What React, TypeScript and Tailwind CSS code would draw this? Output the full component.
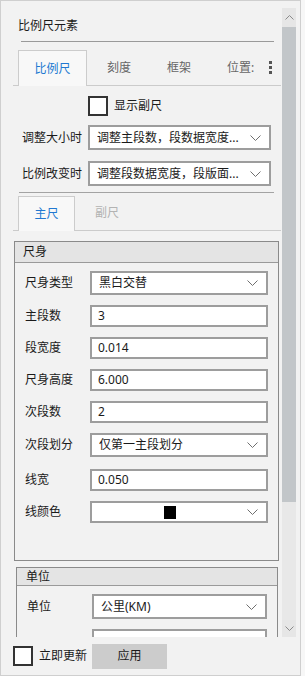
import React from "react";

function Chevron() {
  return (
    <svg width="11" height="6" viewBox="0 0 11 6" className="shrink-0">
      <polyline points="0.5,0.5 5.5,5.5 10.5,0.5" fill="none" stroke="#6f6f6f" strokeWidth="1" />
    </svg>
  );
}

function Select({ text, w, h = 25 }: { text: string; w: string; h?: number }) {
  return (
    <div
      className={`flex items-center border-2 border-[#9d9d9d] bg-white pl-[7px] pr-[8px] ${w} ${h === 25 ? "h-[25px]" : h === 24 ? "h-[24px]" : "h-[22px]"}`}
    >
      <span className="flex-1 truncate text-[12px] leading-[16px] text-[#1a1a1a]">{text}</span>
      <Chevron />
    </div>
  );
}

function Input({ value, w }: { value: string; w: string }) {
  return (
    <div className={`flex h-[22px] items-center border-2 border-[#9d9d9d] bg-white pl-[6px] ${w}`}>
      <span className="text-[12px] leading-[16px] text-[#1a1a1a]">{value}</span>
    </div>
  );
}

function Label({ text, w }: { text: string; w: string }) {
  return <span className={`shrink-0 text-[12px] leading-[16px] text-[#1a1a1a] ${w}`}>{text}</span>;
}

export default function App() {
  return (
    <div className="h-[676px] w-[305px] bg-[#f7f7f7] font-['Noto_Sans','Noto_Sans_CJK_SC',sans-serif]">
      <div className="flex h-[676px] w-[301px] flex-col border border-[#cfcfcf] bg-[#f2f2f2]">
        {/* main area */}
        <div className="flex h-[636px]">
          <div className="flex h-[636px] w-[280px] flex-col overflow-hidden">
            {/* title */}
            <div className="ml-[17px] mt-[17px] text-[12px] leading-[16px] text-[#1a1a1a]">比例尺元素</div>
            <div className="ml-[20px] mt-[7px] h-px w-[253px] shrink-0 bg-[#9a9a9a]" />

            {/* tabs */}
            <div className="ml-[12px] mt-[8px] flex h-[36px] w-[268px] shrink-0 border-b border-[#cbcbcb]">
              <div className="ml-[5px] flex h-[36px] w-[69px] items-center justify-center border border-b-0 border-[#cccccc] bg-[#f8f8f8] text-[12px] text-[#2178d1]">
                比例尺
              </div>
              <div className="flex w-[64px] items-center justify-center text-[12px] text-[#666666]">刻度</div>
              <div className="flex w-[56px] items-center justify-center text-[12px] text-[#666666]">框架</div>
              <div className="flex w-[61px] items-center pl-[20px] text-[12px] text-[#666666]">位置:</div>
              <div className="flex flex-col justify-center gap-[2px] pl-[1px]">
                <div className="h-[3px] w-[3px] bg-[#555555]" />
                <div className="h-[3px] w-[3px] bg-[#555555]" />
                <div className="h-[3px] w-[3px] bg-[#555555]" />
              </div>
            </div>

            {/* show secondary checkbox */}
            <div className="ml-[87px] mt-[10px] flex items-center">
              <div className="h-[20px] w-[20px] border-2 border-[#333333] bg-white" />
              <span className="ml-[6px] text-[12px] leading-[16px] text-[#1a1a1a]">显示副尺</span>
            </div>

            <div className="ml-[21px] mt-[9px] flex items-center">
              <Label text="调整大小时" w="w-[66px]" />
              <Select text="调整主段数，段数据宽度..." w="w-[183px]" />
            </div>
            <div className="ml-[21px] mt-[11px] flex items-center">
              <Label text="比例改变时" w="w-[66px]" />
              <Select text="调整段数据宽度，段版面..." w="w-[183px]" />
            </div>

            <div className="ml-[18px] mt-[6px] h-px w-[255px] shrink-0 bg-[#a3a3a3]" />

            {/* sub tabs */}
            <div className="ml-[12px] mt-[3px] flex h-[35px] w-[268px] shrink-0 border-b border-[#cbcbcb]">
              <div className="ml-[5px] flex h-[35px] w-[57px] items-center justify-center border border-b-0 border-[#cccccc] bg-[#f8f8f8] text-[12px] text-[#2178d1]">
                主尺
              </div>
              <div className="flex w-[64px] items-center justify-center text-[12px] text-[#b3b3b3]">副尺</div>
            </div>

            {/* group 尺身 */}
            <div className="ml-[13px] mt-[10px] flex h-[320px] w-[265px] shrink-0 flex-col border border-[#8a8a8a]">
              <div className="flex h-[21px] items-center border-b border-[#9a9a9a] bg-[#e4e4e4] pl-[8px] text-[12px] text-[#1a1a1a]">
                尺身
              </div>
              <div className="mt-[8px] flex items-center pl-[10px]">
                <Label text="尺身类型" w="w-[65px]" />
                <Select text="黑白交替" w="w-[178px]" h={24} />
              </div>
              <div className="mt-[10px] flex items-center pl-[10px]">
                <Label text="主段数" w="w-[65px]" />
                <Input value="3" w="w-[178px]" />
              </div>
              <div className="mt-[10px] flex items-center pl-[10px]">
                <Label text="段宽度" w="w-[65px]" />
                <Input value="0.014" w="w-[178px]" />
              </div>
              <div className="mt-[10px] flex items-center pl-[10px]">
                <Label text="尺身高度" w="w-[65px]" />
                <Input value="6.000" w="w-[178px]" />
              </div>
              <div className="mt-[10px] flex items-center pl-[10px]">
                <Label text="次段数" w="w-[65px]" />
                <Input value="2" w="w-[178px]" />
              </div>
              <div className="mt-[10px] flex items-center pl-[10px]">
                <Label text="次段划分" w="w-[65px]" />
                <Select text="仅第一主段划分" w="w-[178px]" h={24} />
              </div>
              <div className="mt-[12px] flex items-center pl-[10px]">
                <Label text="线宽" w="w-[65px]" />
                <Input value="0.050" w="w-[178px]" />
              </div>
              <div className="mt-[10px] flex items-center pl-[10px]">
                <Label text="线颜色" w="w-[65px]" />
                <div className="flex h-[22px] w-[178px] items-center border-2 border-[#9d9d9d] bg-white pr-[8px]">
                  <div className="flex flex-1 justify-center">
                    <div className="h-[13px] w-[12px] bg-black" />
                  </div>
                  <Chevron />
                </div>
              </div>
            </div>

            {/* group 单位 */}
            <div className="ml-[15px] mt-[6px] flex h-[120px] w-[262px] shrink-0 flex-col border border-[#8a8a8a]">
              <div className="flex h-[18px] shrink-0 items-center border-b border-[#9a9a9a] bg-[#e4e4e4] pl-[9px] text-[12px] text-[#1a1a1a]">
                单位
              </div>
              <div className="mt-[8px] flex items-center pl-[10px]">
                <Label text="单位" w="w-[65px]" />
                <Select text="公里(KM)" w="w-[175px]" h={25} />
              </div>
              <div className="mt-[10px] flex items-center pl-[75px]">
                <div className="h-[22px] w-[175px] border-2 border-[#9d9d9d] bg-white" />
              </div>
            </div>
          </div>

          {/* scrollbar */}
          <div className="ml-px mt-[7px] flex h-[629px] w-[14px] flex-col">
            <div className="flex h-[19px] items-center justify-center bg-[#e6e6e6]">
              <svg width="9" height="5" viewBox="0 0 9 5">
                <polyline points="0.5,4.5 4.5,0.5 8.5,4.5" fill="none" stroke="#8a8a8a" strokeWidth="1" />
              </svg>
            </div>
            <div className="h-[475px] bg-[#c2c6c9]" />
            <div className="flex-1 bg-[#e8e8e8]" />
            <div className="flex h-[17px] items-center justify-center bg-[#e6e6e6]">
              <svg width="9" height="5" viewBox="0 0 9 5">
                <polyline points="0.5,0.5 4.5,4.5 8.5,0.5" fill="none" stroke="#8a8a8a" strokeWidth="1" />
              </svg>
            </div>
          </div>
        </div>

        {/* bottom bar */}
        <div className="flex h-[38px] items-center">
          <div className="ml-[12px] h-[20px] w-[20px] border-2 border-[#333333] bg-white" />
          <span className="ml-[6px] text-[12px] leading-[16px] text-[#1a1a1a]">立即更新</span>
          <div className="ml-[5px] flex h-[25px] w-[75px] items-center justify-center bg-[#cccccc] text-[12px] text-[#1a1a1a]">
            应用
          </div>
        </div>
      </div>
    </div>
  );
}
